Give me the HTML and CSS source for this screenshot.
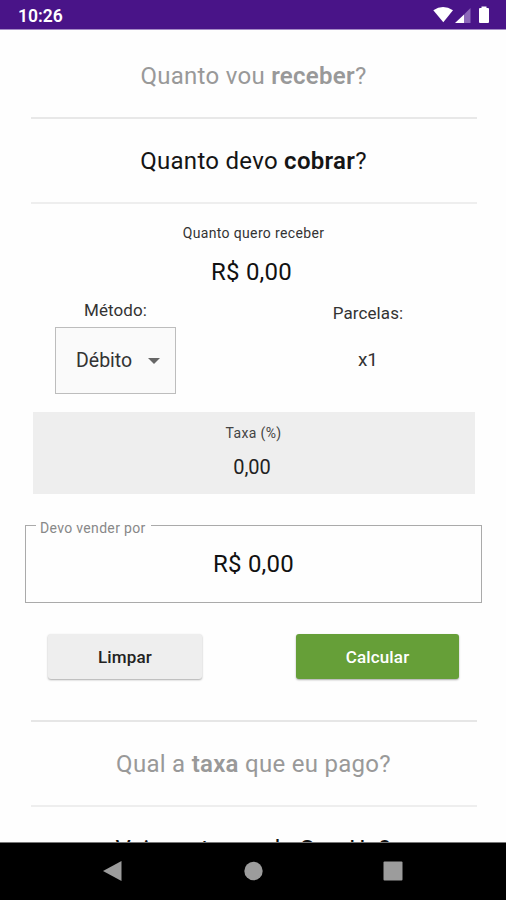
FILE: index.html
```html
<!DOCTYPE html>
<html lang="pt-BR">
<head>
<meta charset="utf-8">
<title>Calculadora de taxas</title>
<link rel="stylesheet" href="styles.css">
</head>
<body>
<header class="status">
  <span class="clock">10:26</span>
  <svg class="status-icons" width="60" height="20" viewBox="0 0 60 20">
    <path fill="#fff" d="M1.3 4.2Q11 -2 21 4.2L11.3 16.2Z"/>
    <path fill="#fff" d="M23 17L32 8.500v8.500Z"/>
    <path fill="#8d68b9" d="M32 8.500L38.500 2v15H32Z"/>
    <path fill="#fff" d="M47 3q0-1 1-1h1.500V0.500h5V2H56q1 0 1 1v13q0 1-1 1h-8q-1 0-1-1Z"/>
  </svg>
</header>
<main class="content">
  <h2 class="tab">Quanto vou <b>receber</b>?</h2>
  <h2 class="tab active">Quanto devo <b>cobrar</b>?</h2>
  <section class="form">
    <label class="caption">Quanto quero receber</label>
    <div class="amount">R$ 0,00</div>
    <div class="options">
      <div class="option">
        <span class="option-label">Método:</span>
        <div class="select"><span>Débito</span><svg width="12" height="6" viewBox="0 0 12 6"><path d="M0 0h12L6 6Z" fill="#666"/></svg></div>
      </div>
      <div class="option parcels">
        <span class="option-label">Parcelas:</span>
        <span class="count">x1</span>
      </div>
    </div>
    <div class="rate"><span class="rate-label">Taxa (%)</span><span class="rate-value">0,00</span></div>
    <fieldset class="result"><legend>Devo vender por</legend><div class="amount">R$ 0,00</div></fieldset>
    <div class="actions">
      <button class="button clear">Limpar</button>
      <button class="button calculate">Calcular</button>
    </div>
  </section>
  <h2 class="tab last">Qual a <b>taxa</b> que eu pago?</h2>
  <h2 class="more">Veja as taxas da SumUp?</h2>
</main>
<nav class="navigation">
  <svg width="20" height="22" viewBox="0 0 20 22"><path d="M1 11L19.500 1v20Z" fill="#9c9c9c"/></svg>
  <svg width="20" height="20" viewBox="0 0 20 20"><circle cx="10.500" cy="10" r="9.200" fill="#9c9c9c"/></svg>
  <svg width="20" height="20" viewBox="0 0 20 20"><rect x=".5" y=".5" width="19" height="19" rx="1" fill="#9c9c9c"/></svg>
</nav>
</body>
</html>
```
FILE: styles.css
```css
* { box-sizing: border-box; }
body { margin: 0; width: 506px; height: 900px; overflow: hidden; display: flex; flex-direction: column; background: #fefefe; color: #111; font-family: Roboto, sans-serif; }
.status { height: 30px; flex: none; display: flex; justify-content: space-between; padding: 6px 15px 0 18px; background: #491488; border-bottom: 1px solid #a58bc5; color: #fff; }
.clock { font-size: 17.5px; font-weight: 600; line-height: 20px; }
.status-icons { flex: none; margin-right: -1px; }
.content { flex: none; height: 812px; overflow: hidden; }
.tab { height: 85px; margin: 0 29px 0 31px; border-bottom: 2px solid #e8e8e8; display: flex; align-items: center; justify-content: center; white-space: pre; font-size: 24px; letter-spacing: .28px; font-weight: 400; color: #999; padding: 2px 1px 0 0; }
.tab:first-child { height: 89px; padding-top: 5px; }
.tab b { font-weight: 600; }
.active { color: #151515; padding-top: 1px; border-color: #eee; }
.last { padding-top: 1px; border-color: #eee; }
.form { height: 518px; border-bottom: 2px solid #e6e6e6; margin: 0 29px 0 31px; padding-top: 20px; display: flex; flex-direction: column; }
.caption { text-align: center; font-size: 14px; letter-spacing: .35px; line-height: 18px; color: #333; margin-left: -1px; }
.amount { text-align: center; font-size: 24px; letter-spacing: .2px; line-height: 30px; }
.form > .amount { margin-top: 15px; margin-left: -5px; }
.options { display: flex; justify-content: space-between; margin-top: 13px; padding: 0 48px 0 24px; height: 94px; }
.option { display: flex; flex-direction: column; align-items: center; }
.option-label { font-size: 17px; letter-spacing: .1px; line-height: 20px; color: #333; }
.select { width: 121px; height: 67px; margin-top: 7px; border: 1px solid #bdbdbd; background: #fafafa; display: flex; align-items: center; justify-content: space-between; padding: 0 15px 0 20px; font-size: 19.5px; color: #333; }
.parcels { padding-top: 3px; width: 122px; }
.count { font-size: 19px; line-height: 22px; margin-top: 26px; color: #333; }
.rate { margin: 18px 2px 0; height: 82px; background: #eee; display: flex; flex-direction: column; align-items: center; padding-top: 12px; }
.rate-label { font-size: 14px; letter-spacing: .35px; line-height: 18px; color: #444; margin-left: -1px; }
.rate-value { font-size: 20px; line-height: 24px; margin-top: 13px; color: #222; margin-left: -4px; }
.result { margin: 22px -5px 0 -6px; height: 87px; padding: 0 0 0 10px; border: 1px solid #aaa; }
.result legend { font-size: 14px; letter-spacing: .33px; line-height: 12px; color: #888; padding: 6px 5px 0 4px; }
.result .amount { margin: 15px 0 0 -10px; }
.actions { display: flex; justify-content: space-between; margin-top: 31px; padding: 0 18px 0 17px; }
.button { height: 45px; border: 0; border-radius: 3px; font: 500 17px/20px Roboto, sans-serif; letter-spacing: .15px; box-shadow: 0 1px 2px #aaa; }
.clear { width: 154px; background: #eee; color: #222; }
.calculate { width: 163px; background: #669f38; color: #fff; }
.more { margin: 27px 0 0; text-align: center; font-size: 24px; letter-spacing: .25px; line-height: 30px; font-weight: 400; }
.navigation { flex: 1; background: #000; border-top: 1px solid #777; display: flex; justify-content: space-between; align-items: center; padding: 0 103px 2px 102px; }
```
